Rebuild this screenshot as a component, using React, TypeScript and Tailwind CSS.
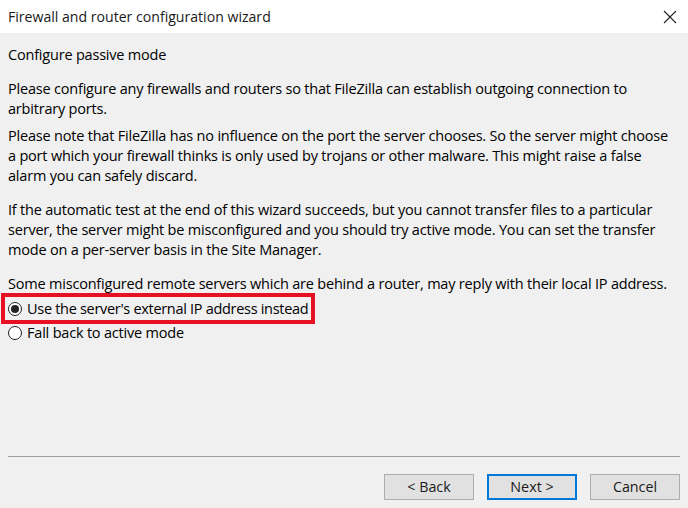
export default function App() {
  return (
    <div className="w-[688px] h-[508px] flex flex-col bg-[#f0f0f0] text-[14.5px] text-black overflow-hidden" style={{ fontFamily: '"Open Sans", "Noto Sans", sans-serif' }}>
      {/* title bar */}
      <div className="h-[33px] bg-white flex items-center justify-between pl-2 pr-[10px] shrink-0">
        <span className="text-[14.1px] text-[#1a1a1a]">Firewall and router configuration wizard</span>
        <svg width="14" height="14" viewBox="0 0 14 14" className="mr-[1px]">
          <path d="M1 1 L13 13 M13 1 L1 13" stroke="#222" strokeWidth="1.1" />
        </svg>
      </div>

      <div className="flex-1 flex flex-col px-2 pt-3 leading-[20px] tracking-[-0.2px]">
        <p className="whitespace-nowrap">Configure passive mode</p>
        <p className="mt-[14px] whitespace-nowrap">
          Please configure any firewalls and routers so that FileZilla can establish outgoing connection to
          <br />
          arbitrary ports.
        </p>
        <p className="mt-[7px] whitespace-nowrap">
          Please note that FileZilla has no influence on the port the server chooses. So the server might choose
          <br />
          a port which your firewall thinks is only used by trojans or other malware. This might raise a false
          <br />
          alarm you can safely discard.
        </p>
        <p className="mt-[14px] whitespace-nowrap">
          If the automatic test at the end of this wizard succeeds, but you cannot transfer files to a particular
          <br />
          server, the server might be misconfigured and you should try active mode. You can set the transfer
          <br />
          mode on a per-server basis in the Site Manager.
        </p>
        <p className="mt-[14px] whitespace-nowrap">
          Some misconfigured remote servers which are behind a router, may reply with their local IP address.
        </p>

        <div className="relative mt-[3px] h-[24px] flex items-center">
          <span className="w-[14px] h-[14px] rounded-full border border-[#222] bg-white flex items-center justify-center">
            <span className="w-[8px] h-[8px] rounded-full bg-[#222]" />
          </span>
          <span className="ml-[5px] whitespace-nowrap tracking-[-0.3px]">Use the server's external IP address instead</span>
          <div className="absolute left-[-7px] top-[-4px] w-[314px] h-[31px] border-4 border-[#e81123]" />
        </div>
        <div className="h-[24px] flex items-center">
          <span className="w-[14px] h-[14px] rounded-full border border-[#222] bg-white" />
          <span className="ml-[5px] whitespace-nowrap">Fall back to active mode</span>
        </div>
      </div>

      {/* separator */}
      <div className="mx-2 h-px bg-[#a0a0a0] shrink-0" />

      <div className="flex justify-end gap-[13px] pr-2 pt-[17px] pb-2 shrink-0 text-[14.3px]">
        <button className="w-[90px] h-[26px] bg-[#e1e1e1] border border-[#adadad] text-[#1a1a1a]">&lt; Back</button>
        <button className="w-[90px] h-[26px] bg-[#e1e1e1] border-2 border-[#0078d7] text-[#1a1a1a]">Next &gt;</button>
        <button className="w-[90px] h-[26px] bg-[#e1e1e1] border border-[#adadad] text-[#1a1a1a]">Cancel</button>
      </div>
    </div>
  );
}
